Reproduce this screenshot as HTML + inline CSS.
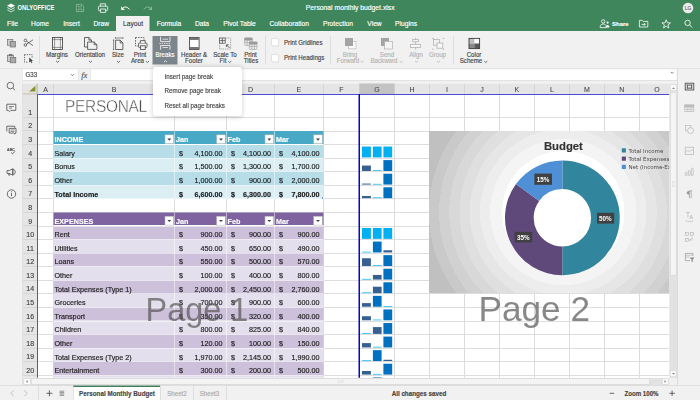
<!DOCTYPE html>
<html lang="en"><head><meta charset="utf-8"><title>Personal monthly budget.xlsx</title>
<style>
html,body{margin:0;padding:0;width:700px;height:400px;overflow:hidden;background:#f1f1f1}
#r{position:absolute;left:0;top:0;width:1400px;height:800px;overflow:hidden;transform:scale(.5);transform-origin:0 0;font-family:"Liberation Sans",sans-serif;color:#444}
.a{position:absolute;display:block}
.t{position:absolute;white-space:nowrap;-webkit-text-stroke:0.3px}
</style></head><body><div id="r">
<div class="a" style="left:0px;top:0px;width:1400px;height:62px;background:#40865c;"></div>
<svg class="a" style="left:0px;top:0px;" width="1400" height="62" viewBox="0 0 700 31"><path d="M11 3.6 L15 5.7 L11 7.8 L7 5.7 Z" fill="#fff"/><path d="M7.3 7.6 L11 9.6 L14.7 7.6" fill="none" stroke="#fff" stroke-width="1" opacity=".85"/><path d="M7.3 9.9 L11 11.9 L14.7 9.9" fill="none" stroke="#fff" stroke-width="1" opacity=".7"/><g opacity=".38" fill="none" stroke="#fff" stroke-width=".8"><path d="M76.4 4.4 h5.6 l1.6 1.6 v5.6 h-7.2 z"/><path d="M78 4.4 v2.4 h3.4 v-2.4"/><path d="M78 11.6 v-2.6 h4 v2.6"/></g><g fill="none" stroke="#fff" stroke-width=".8"><rect x="98.4" y="6.2" width="9.2" height="4.4" rx="1"/><path d="M100.4 6.2 v-2.4 h5.2 v2.4"/><path d="M100.4 9 h5.2 v3.4 h-5.2 z" fill="#40865c"/></g><path d="M122.6 8.4 Q125.6 5 129.5 9.3" fill="none" stroke="#fff" stroke-width="1"/><path d="M121.2 6.3 L121.2 9.9 L124.8 9.9 Z" fill="#fff"/><g opacity=".38"><path d="M150.6 8.4 Q147.6 5 143.7 9.3" fill="none" stroke="#fff" stroke-width="1"/><path d="M152 6.3 L152 9.9 L148.4 9.9 Z" fill="#fff"/></g><circle cx="688" cy="8" r="5.3" fill="#ececec"/><g fill="none" stroke="#fff" stroke-width=".8"><circle cx="603.2" cy="21.4" r="1.7"/><path d="M600.2 27.6 v-1 c0 -1.6 1.4 -2.6 3 -2.6 c1.6 0 3 1 3 2.6 v1 z"/></g><circle cx="607.6" cy="22.6" r="1.1" fill="#fff"/><path d="M605.8 27.6 c0 -1.6 .8 -2.6 1.8 -2.6 c1 0 1.8 1 1.8 2.6 z" fill="#fff"/><g fill="none" stroke="#fff" stroke-width=".8"><path d="M639.4 27 v-6.6 h3 l.8 1 h4.6 v5.6 z"/><path d="M641.6 24.4 h3.6 M643.9 23.1 l1.4 1.3 l-1.4 1.3"/></g><polygon points="666.2 19.8 667.32 22.76 670.48 22.91 668.01 24.89 668.85 27.94 666.2 26.2 663.55 27.94 664.39 24.89 661.92 22.91 665.08 22.76" fill="none" stroke="#fff" stroke-width=".8" stroke-linejoin="miter"/><g fill="none" stroke="#fff" stroke-width=".85"><circle cx="687.6" cy="22.9" r="2.7"/><path d="M689.6 24.9 L692.2 27.6"/></g></svg>
<div class="t" style="top:6px;line-height:19.32px;font-size:13.8px;color:#fff;font-weight:bold;left:35.2px;transform:scaleX(.84);transform-origin:0 50%;-webkit-text-stroke:0;">ONLYOFFICE</div>
<div class="t" style="top:6px;line-height:19.04px;font-size:13.6px;color:#fff;left:700.4px;transform:translateX(-50%);">Personal monthly budget.xlsx</div>
<div class="t" style="top:10px;line-height:13.72px;font-size:9.8px;color:#6a6a6a;left:1376px;transform:translateX(-50%);">LG</div>
<div class="t" style="top:40px;line-height:16.8px;font-size:12px;color:#fff;font-weight:bold;left:1224px;">Share</div>
<div class="a" style="left:232px;top:32px;width:67.2px;height:30px;background:#f1f1f1;"></div>
<div class="t" style="top:39px;line-height:18.76px;font-size:13.4px;color:#fff;left:25px;transform:translateX(-50%);">File</div>
<div class="t" style="top:39px;line-height:18.76px;font-size:13.4px;color:#fff;left:80px;transform:translateX(-50%);">Home</div>
<div class="t" style="top:39px;line-height:18.76px;font-size:13.4px;color:#fff;left:143px;transform:translateX(-50%);">Insert</div>
<div class="t" style="top:39px;line-height:18.76px;font-size:13.4px;color:#fff;left:202.6px;transform:translateX(-50%);">Draw</div>
<div class="t" style="top:39px;line-height:18.76px;font-size:13.4px;color:#444;left:266px;transform:translateX(-50%);">Layout</div>
<div class="t" style="top:39px;line-height:18.76px;font-size:13.4px;color:#fff;left:338px;transform:translateX(-50%);">Formula</div>
<div class="t" style="top:39px;line-height:18.76px;font-size:13.4px;color:#fff;left:404px;transform:translateX(-50%);">Data</div>
<div class="t" style="top:39px;line-height:18.76px;font-size:13.4px;color:#fff;left:479px;transform:translateX(-50%);">Pivot Table</div>
<div class="t" style="top:39px;line-height:18.76px;font-size:13.4px;color:#fff;left:578.4px;transform:translateX(-50%);">Collaboration</div>
<div class="t" style="top:39px;line-height:18.76px;font-size:13.4px;color:#fff;left:676px;transform:translateX(-50%);">Protection</div>
<div class="t" style="top:39px;line-height:18.76px;font-size:13.4px;color:#fff;left:749px;transform:translateX(-50%);">View</div>
<div class="t" style="top:39px;line-height:18.76px;font-size:13.4px;color:#fff;left:812px;transform:translateX(-50%);">Plugins</div>
<div class="a" style="left:0px;top:62px;width:1400px;height:75.4px;background:#f1f1f1;"></div>
<div class="a" style="left:0px;top:136.8px;width:1400px;height:1.2px;background:#d4d4d4;"></div>
<div class="a" style="left:79px;top:72px;width:1px;height:57px;background:#cbcbcb;"></div>
<div class="a" style="left:529.5px;top:72px;width:1px;height:57px;background:#cbcbcb;"></div>
<div class="a" style="left:659.5px;top:72px;width:1px;height:57px;background:#cbcbcb;"></div>
<div class="a" style="left:906.5px;top:72px;width:1px;height:57px;background:#cbcbcb;"></div>
<div class="a" style="left:305px;top:72px;width:50px;height:57px;background:#7d858c;"></div>
<svg class="a" style="left:0px;top:62px;" width="1400" height="76" viewBox="0 31 700 38"><g stroke="#707070" stroke-width=".7"><rect x="7.6" y="39.6" width="5.2" height="5.6" fill="#cfcfcf"/><rect x="10.2" y="41.4" width="5.2" height="5.6" fill="#a9a9a9"/></g><g stroke="#707070" stroke-width=".7"><rect x="7.6" y="55.2" width="6" height="6.4" fill="#cfcfcf"/><rect x="9.2" y="54.3" width="2.8" height="1.4" fill="#707070"/><rect x="10.2" y="57.4" width="5.6" height="5.4" fill="#a9a9a9"/></g><g fill="none" stroke="#444" stroke-width=".75"><circle cx="25.4" cy="40.4" r="1.3"/><circle cx="25.4" cy="45" r="1.3"/><path d="M26.5 41.2 L33 45.6 M26.5 44.2 L33 39.8"/></g><g fill="none" stroke="#444" stroke-width=".75"><path d="M24.5 54.6 h7.6 v3 M24.5 54.6 v7.6 h3" stroke-dasharray="1.3 1"/></g><path d="M29.2 57.4 L29.2 62.6 L30.6 61.4 L31.6 63.2 L32.4 62.8 L31.5 61 L33 60.8 Z" fill="#444"/><g fill="none" stroke="#444"><rect x="52.5" y="37.5" width="10" height="12" stroke-width=".85"/><path d="M54.6 37.5 v12 M60.4 37.5 v12 M52.5 39.6 h10 M52.5 47.4 h10" stroke-width=".5"/></g><g fill="#f1f1f1" stroke="#444" stroke-width=".8"><path d="M84.5 37.5 h4.4 l2.6 2.6 v6.9 h-7 z"/><path d="M88.9 37.5 v2.6 h2.6" fill="none"/><path d="M87.6 42 h6.6 l2.7 2.7 v4.7 h-9.3 z"/><path d="M94.2 42 v2.7 h2.7" fill="none"/></g><g fill="none" stroke="#444" stroke-width=".8"><path d="M115.6 40.2 h4.6 l2.7 2.7 v6.6 h-7.3 z"/><path d="M120.2 40.2 v2.7 h2.7"/><path d="M115.4 38 h7.6 M115.4 37.2 v1.6 M123 37.2 v1.6 M113.6 40 v9.6 M112.8 40 h1.6 M112.8 49.6 h1.6" stroke-width=".6"/></g><g fill="none" stroke="#444" stroke-width=".8"><path d="M135.5 37.5 h8.5 v3 M135.5 37.5 v8.5 h3" stroke-dasharray="1.5 1.1"/><rect x="138.5" y="43" width="8.5" height="4.5" rx="1" fill="#f1f1f1"/><path d="M140.4 43 v-2.4 h4.8 v2.4" fill="#f1f1f1"/><rect x="140.4" y="45.8" width="4.8" height="3.6" fill="#f1f1f1"/></g><g fill="none" stroke="#fff" stroke-width=".8"><path d="M160.6 36.8 v4.8 h9.4 v-4.8"/><path d="M162.6 39.2 h5.4" stroke-width=".7"/><path d="M159.4 43.5 h11.8" stroke-dasharray="1.4 .9" stroke-width=".7"/><path d="M160.6 49.7 v-4.2 h9.4 v4.2"/><path d="M162.6 47.5 h5.4" stroke-width=".7"/></g><g stroke="#444"><rect x="189.5" y="37.5" width="9.6" height="12" fill="#fff" stroke-width=".85"/><path d="M189.9 39.1 h8.8 M189.9 47.9 h8.8" stroke-width="1.5" stroke="#4a4a4a"/></g><g fill="none" stroke="#444" stroke-width=".7"><rect x="219.6" y="38" width="5.6" height="5.2"/><path d="M222.4 38 v5.2 M219.6 40.6 h5.6"/><path d="M225.2 38 h5.4 v11 h-11 v-5.8" stroke-dasharray="1.3 1" stroke-width=".6" stroke="#666"/><path d="M229.6 48 L226.6 45 M226.4 47 v-2.2 h2.2" stroke-width=".8"/></g><g fill="#ececec" stroke="#9a9a9a" stroke-width=".6"><rect x="244.6" y="38" width="7.6" height="7.4" rx=".8"/><path d="M244.6 40 h7.6 M244.6 42.4 h7.6 M247.1 40 v5.4 M249.7 40 v5.4" fill="none"/><rect x="244.6" y="38" width="7.6" height="2" fill="#9a9a9a" rx=".6"/><rect x="249.4" y="42" width="7.6" height="7.4" rx=".8"/><path d="M249.4 44 h7.6 M249.4 46.4 h7.6 M251.9 44 v5.4 M254.5 44 v5.4" fill="none"/><rect x="249.4" y="42" width="7.6" height="2" fill="#9a9a9a" rx=".6"/></g><rect x="271.6" y="38.6" width="7" height="7.2" rx=".8" fill="#fff" stroke="#cfcfcf" stroke-width=".6"/><rect x="271.6" y="54.6" width="7" height="7.2" rx=".8" fill="#fff" stroke="#cfcfcf" stroke-width=".6"/><rect x="348.6" y="41.6" width="7.4" height="7.2" fill="#fafafa" stroke="#bdbdbd" stroke-width=".7"/><rect x="345" y="38" width="8" height="8" fill="#a3a3a3"/><rect x="381" y="38" width="8" height="8" fill="#a3a3a3"/><rect x="384.6" y="41.4" width="8" height="7.6" fill="#f4f4f4" stroke="#b0b0b0" stroke-width=".7"/><g fill="#f6f6f6" stroke="#ababab" stroke-width=".7"><path d="M415.6 37.8 v11.8" fill="none"/><rect x="412.8" y="39.4" width="5.6" height="2.4"/><rect x="410.6" y="44.4" width="10" height="3"/></g><g fill="none" stroke="#ababab" stroke-width=".7"><rect x="433.6" y="39.6" width="5.8" height="5.6"/><rect x="437" y="43" width="5.8" height="5.2" fill="#f6f6f6"/><path d="M432.2 38.4 h1.4 M442.8 38.4 h1.4 M432.2 49.2 h1.4 M442.8 49.2 h1.4" stroke-width=".9"/></g><rect x="469" y="38.4" width="10.6" height="10.2" fill="#fff"/><rect x="469" y="38.4" width="5.3" height="5.1" fill="#bdbdbd"/><rect x="469" y="43.5" width="5.3" height="5.1" fill="#8a8a8a"/><rect x="474.3" y="43.5" width="5.3" height="5.1" fill="#5a5a5a"/><rect x="469" y="38.4" width="10.6" height="10.2" fill="none" stroke="#3c3c3c" stroke-width=".9"/><path d="M56.05 60.85 L57.6 62.35 L59.15 60.85" fill="none" stroke="#444" stroke-width="0.75"/><path d="M88.95 60.85 L90.5 62.35 L92.05 60.85" fill="none" stroke="#444" stroke-width="0.75"/><path d="M117.05 60.85 L118.6 62.35 L120.15 60.85" fill="none" stroke="#444" stroke-width="0.75"/><path d="M145.85 61.05 L147.4 62.55 L148.95 61.05" fill="none" stroke="#444" stroke-width="0.75"/><path d="M163.95 62.25 L165.5 60.75 L167.05 62.25" fill="none" stroke="#fff" stroke-width="0.75"/><path d="M228.15 61.05 L229.7 62.55 L231.25 61.05" fill="none" stroke="#444" stroke-width="0.75"/><path d="M360.65 61.05 L362.2 62.55 L363.75 61.05" fill="none" stroke="#b4b4b4" stroke-width="0.75"/><path d="M399.65 61.05 L401.2 62.55 L402.75 61.05" fill="none" stroke="#b4b4b4" stroke-width="0.75"/><path d="M414.95 60.85 L416.5 62.35 L418.05 60.85" fill="none" stroke="#b4b4b4" stroke-width="0.75"/><path d="M436.95 60.85 L438.5 62.35 L440.05 60.85" fill="none" stroke="#b4b4b4" stroke-width="0.75"/><path d="M484.25 61.05 L485.8 62.55 L487.35 61.05" fill="none" stroke="#444" stroke-width="0.75"/></svg>
<div class="t" style="top:101px;line-height:18.48px;font-size:13.2px;color:#444;left:114.4px;transform:translateX(-50%) scaleX(0.932);">Margins</div>
<div class="t" style="top:101px;line-height:18.48px;font-size:13.2px;color:#444;left:180px;transform:translateX(-50%) scaleX(0.932);">Orientation</div>
<div class="t" style="top:101px;line-height:18.48px;font-size:13.2px;color:#444;left:236px;transform:translateX(-50%) scaleX(0.932);">Size</div>
<div class="t" style="top:101px;line-height:18.48px;font-size:13.2px;color:#444;left:280.4px;transform:translateX(-50%) scaleX(0.932);">Print</div>
<div class="t" style="top:113px;line-height:18.48px;font-size:13.2px;color:#444;left:275px;transform:translateX(-50%) scaleX(0.932);">Area</div>
<div class="t" style="top:101px;line-height:18.48px;font-size:13.2px;color:#fff;left:330px;transform:translateX(-50%) scaleX(0.932);">Breaks</div>
<div class="t" style="top:101px;line-height:18.48px;font-size:13.2px;color:#444;left:388px;transform:translateX(-50%) scaleX(0.932);">Header &amp;</div>
<div class="t" style="top:113px;line-height:18.48px;font-size:13.2px;color:#444;left:388px;transform:translateX(-50%) scaleX(0.932);">Footer</div>
<div class="t" style="top:101px;line-height:18.48px;font-size:13.2px;color:#444;left:450.4px;transform:translateX(-50%) scaleX(0.932);">Scale To</div>
<div class="t" style="top:113px;line-height:18.48px;font-size:13.2px;color:#444;left:445.8px;transform:translateX(-50%) scaleX(0.932);">Fit</div>
<div class="t" style="top:101px;line-height:18.48px;font-size:13.2px;color:#444;left:501.2px;transform:translateX(-50%) scaleX(0.932);">Print</div>
<div class="t" style="top:113px;line-height:18.48px;font-size:13.2px;color:#444;left:502px;transform:translateX(-50%) scaleX(0.932);">Titles</div>
<div class="t" style="top:77px;line-height:18.48px;font-size:13.2px;color:#444;left:568px;transform:scaleX(0.932);transform-origin:0 50%;">Print Gridlines</div>
<div class="t" style="top:107px;line-height:18.48px;font-size:13.2px;color:#444;left:568px;transform:scaleX(0.932);transform-origin:0 50%;">Print Headings</div>
<div class="t" style="top:101px;line-height:18.48px;font-size:13.2px;color:#b4b4b4;left:700.4px;transform:translateX(-50%) scaleX(0.932);">Bring</div>
<div class="t" style="top:113px;line-height:18.48px;font-size:13.2px;color:#b4b4b4;left:696px;transform:translateX(-50%) scaleX(0.932);">Forward</div>
<div class="t" style="top:101px;line-height:18.48px;font-size:13.2px;color:#b4b4b4;left:773.6px;transform:translateX(-50%) scaleX(0.932);">Send</div>
<div class="t" style="top:113px;line-height:18.48px;font-size:13.2px;color:#b4b4b4;left:768.4px;transform:translateX(-50%) scaleX(0.932);">Backward</div>
<div class="t" style="top:101px;line-height:18.48px;font-size:13.2px;color:#b4b4b4;left:832px;transform:translateX(-50%) scaleX(0.932);">Align</div>
<div class="t" style="top:101px;line-height:18.48px;font-size:13.2px;color:#b4b4b4;left:875.2px;transform:translateX(-50%) scaleX(0.932);">Group</div>
<div class="t" style="top:101px;line-height:18.48px;font-size:13.2px;color:#444;left:947.6px;transform:translateX(-50%) scaleX(0.932);">Color</div>
<div class="t" style="top:113px;line-height:18.48px;font-size:13.2px;color:#444;left:942.4px;transform:translateX(-50%) scaleX(0.932);">Scheme</div>
<div class="a" style="left:0px;top:138px;width:44.4px;height:632.4px;background:#f1f1f1;"></div>
<div class="a" style="left:44px;top:138px;width:1.2px;height:632.4px;background:#d0d0d0;"></div>
<div class="a" style="left:1354.8px;top:138px;width:45.2px;height:632.4px;background:#f1f1f1;"></div>
<div class="a" style="left:1353.8px;top:138px;width:1.6px;height:632.4px;background:#c6c6c6;"></div>
<svg class="a" style="left:0px;top:156px;" width="44" height="250" viewBox="0 78 22 125"><g fill="none" stroke="#555" stroke-width=".85"><circle cx="10.4" cy="85.6" r="3.3"/><path d="M12.8 88 L15 90.2"/></g><g fill="none" stroke="#555" stroke-width=".85"><path d="M6.8 104.2 h9 v6.2 h-5 l-1.3 1.3 l-1.3 -1.3 h-1.4 z"/><path d="M9 106.5 h4.8 M9 108.1 h3" stroke-width=".7"/></g><g fill="none" stroke="#555" stroke-width=".85"><path d="M6.8 131.4 v-5.2 h8 v1.6"/><path d="M9.2 128.4 h6.8 v4.6 h-1 v1.2 l-1.2 -1.2 h-4.6 z"/><path d="M10.6 130 h4 M10.6 131.5 h4" stroke-width=".6"/></g><path d="M11.2 152.6 l1.3 1.3 l2.4 -2.6" fill="none" stroke="#555" stroke-width=".9"/><g fill="#555" stroke="#555" stroke-width=".6"><path d="M7 170.6 h2.2 l3.6 -1.8 v6.4 l-3.6 -1.8 h-2.2 z" fill="none" stroke-width=".85"/><path d="M12.8 169 c1.8 .4 2.4 1.8 2.4 3 c0 1.2 -.6 2.6 -2.4 3 z" fill="none" stroke-width=".8"/><path d="M8.6 173.4 v1.8 h1.2 v-1.8" fill="none" stroke-width=".7"/></g><g fill="none" stroke="#555" stroke-width=".85"><circle cx="11.5" cy="194" r="4.2"/><path d="M11.5 193.2 v3 M11.5 191.4 v.9" stroke-width=".9"/></g></svg>
<div class="t" style="top:295px;line-height:10.08px;font-size:7.2px;color:#555;font-weight:bold;left:22px;transform:translateX(-50%);">ABC</div>
<svg class="a" style="left:1356px;top:160px;" width="44" height="380" viewBox="678 80 22 190"><g fill="none" stroke="#4a4a4a" stroke-width=".85"><rect x="685.2" y="83.2" width="8.6" height="6.8"/><rect x="687.3" y="85.1" width="4.4" height="3" stroke-width=".8" /><path d="M685.2 85.1 h8.6 M685.2 88.1 h8.6 M687.3 83.2 v6.8 M691.7 83.2 v6.8" stroke-width=".4" stroke-dasharray=".6 .5"/></g><g fill="none" stroke="#b9b9b9" stroke-width=".7"><rect x="684.8" y="105" width="9" height="6.4"/><path d="M684.8 107.2 h9 M684.8 109.3 h9 M687.8 105 v6.4 M690.8 105 v6.4"/><rect x="684.8" y="105" width="9" height="1.6" fill="#b9b9b9"/></g><g fill="#f1f1f1" stroke="#b9b9b9" stroke-width=".75"><rect x="685.4" y="125.4" width="5.4" height="5.4"/><circle cx="690.6" cy="130.6" r="3"/></g><g fill="none" stroke="#b9b9b9" stroke-width=".75"><rect x="685.2" y="147.2" width="8.2" height="7.2"/><path d="M685.6 152.4 l2.2 -2.2 l1.8 1.6 l2 -2.4 l1.6 1.6"/></g><g fill="none" stroke="#b9b9b9" stroke-width=".7"><rect x="685.4" y="172.4" width="1.8" height="3.2" rx=".6"/><rect x="688.4" y="170.6" width="1.8" height="5" rx=".6"/><rect x="691.4" y="168.2" width="1.8" height="7.4" rx=".6"/></g><path d="M689.4 190.8 h2.8 M689.4 190.8 v7.4 M691.2 190.8 v7.4" fill="none" stroke="#9a9a9a" stroke-width=".7"/><path d="M689.4 190.8 c-3.6 0 -3.6 4 0 4 z" fill="#9a9a9a"/><g fill="none" stroke="#b9b9b9" stroke-width=".7"><path d="M685.8 212.4 h4.2 M687.9 212.4 v5"/><path d="M689.6 219 l1.6 -4 l1.6 4 M690.2 217.8 h2"/><path d="M685.4 220.8 c2 1 6 1 8 0" /></g><g fill="none" stroke="#b9b9b9" stroke-width=".7"><rect x="685.4" y="232.6" width="3" height="2.6"/><rect x="690.6" y="232.6" width="3" height="2.6"/><rect x="685.4" y="238.6" width="3" height="2.6"/><path d="M692 236.6 v3.4 h-2.2 M690.8 239 l-1 1 l1 1"/></g><g fill="none" stroke="#9a9a9a" stroke-width=".7"><path d="M690 260.6 h-4.6 v-7.2 h7.6 v2.4"/><path d="M685.4 255.2 h7.6 M685.4 257 h4" stroke-width=".5"/><path d="M689.6 257.4 h5 l-1.9 2.2 v2.6 l-1.2 -.8 v-1.8 z" fill="#8a8a8a" stroke="none"/></g></svg>
<div class="a" style="left:45.2px;top:138px;width:1309.2px;height:29.2px;background:#f1f1f1;"></div>
<div class="a" style="left:45.8px;top:139px;width:110.4px;height:21.2px;background:#fff;"></div>
<div class="a" style="left:181.2px;top:139px;width:1172px;height:21.2px;background:#fff;"></div>
<div class="a" style="left:45.2px;top:160px;width:1309.2px;height:1px;background:#d2d2d2;"></div>
<div class="a" style="left:156.2px;top:139px;width:1px;height:21.2px;background:#d8d8d8;"></div>
<div class="a" style="left:180.6px;top:139px;width:1px;height:21.2px;background:#d8d8d8;"></div>
<div class="t" style="top:141px;line-height:18.48px;font-size:13.2px;color:#444;left:51.2px;transform:scaleX(0.932);transform-origin:0 50%;">G33</div>
<div class="t" style="top:138px;line-height:24.08px;font-size:17.2px;color:#555;left:168.6px;transform:translateX(-50%);font-family:'Liberation Serif',serif;"><i>fx</i></div>
<svg class="a" style="left:120px;top:138px;" width="1234" height="24" viewBox="60 69 617 12"><path d="M70.9 74.15 L72.4 75.65 L73.9 74.15" fill="none" stroke="#555" stroke-width="0.7"/><path d="M670.7 71.85 L672.2 73.35 L673.7 71.85" fill="none" stroke="#555" stroke-width="0.7"/></svg>
<div class="a" style="left:0;top:0;width:1400px;height:755.6px;overflow:hidden;clip-path:inset(0 60.6px 0 0)"><div class="a" style="left:45.6px;top:167px;width:1293.8px;height:588.6px;background:#fff;"></div><div class="a" style="left:45.6px;top:167px;width:1293.8px;height:21px;background:#e5e5e5;"></div><div class="a" style="left:718.8px;top:167px;width:70.2px;height:21px;background:#c3c3c3;"></div><div class="a" style="left:45.6px;top:187.8px;width:1293.8px;height:1px;background:#c6c6c6;"></div><div class="a" style="left:74.9px;top:167px;width:1px;height:21px;background:#c6c6c6;"></div><div class="a" style="left:106.3px;top:167px;width:1px;height:21px;background:#c6c6c6;"></div><div class="a" style="left:348.7px;top:167px;width:1px;height:21px;background:#c6c6c6;"></div><div class="a" style="left:452.1px;top:167px;width:1px;height:21px;background:#c6c6c6;"></div><div class="a" style="left:548.7px;top:167px;width:1px;height:21px;background:#c6c6c6;"></div><div class="a" style="left:646.1px;top:167px;width:1px;height:21px;background:#c6c6c6;"></div><div class="a" style="left:718.3px;top:167px;width:1px;height:21px;background:#c6c6c6;"></div><div class="a" style="left:788.5px;top:167px;width:1px;height:21px;background:#c6c6c6;"></div><div class="a" style="left:858.3px;top:167px;width:1px;height:21px;background:#c6c6c6;"></div><div class="a" style="left:928.3px;top:167px;width:1px;height:21px;background:#c6c6c6;"></div><div class="a" style="left:998.3px;top:167px;width:1px;height:21px;background:#c6c6c6;"></div><div class="a" style="left:1068.3px;top:167px;width:1px;height:21px;background:#c6c6c6;"></div><div class="a" style="left:1138.3px;top:167px;width:1px;height:21px;background:#c6c6c6;"></div><div class="a" style="left:1208.3px;top:167px;width:1px;height:21px;background:#c6c6c6;"></div><div class="a" style="left:1278.3px;top:167px;width:1px;height:21px;background:#c6c6c6;"></div><div class="a" style="left:1348.3px;top:167px;width:1px;height:21px;background:#c6c6c6;"></div><div class="t" style="top:170px;line-height:19.6px;font-size:14px;color:#444;left:91.1px;transform:translateX(-50%);-webkit-text-stroke:0.15px;">A</div><div class="t" style="top:170px;line-height:19.6px;font-size:14px;color:#444;left:228px;transform:translateX(-50%);-webkit-text-stroke:0.15px;">B</div><div class="t" style="top:170px;line-height:19.6px;font-size:14px;color:#444;left:400.9px;transform:translateX(-50%);-webkit-text-stroke:0.15px;">C</div><div class="t" style="top:170px;line-height:19.6px;font-size:14px;color:#444;left:500.9px;transform:translateX(-50%);-webkit-text-stroke:0.15px;">D</div><div class="t" style="top:170px;line-height:19.6px;font-size:14px;color:#444;left:597.9px;transform:translateX(-50%);-webkit-text-stroke:0.15px;">E</div><div class="t" style="top:170px;line-height:19.6px;font-size:14px;color:#444;left:682.7px;transform:translateX(-50%);-webkit-text-stroke:0.15px;">F</div><div class="t" style="top:170px;line-height:19.6px;font-size:14px;color:#444;left:753.9px;transform:translateX(-50%);-webkit-text-stroke:0.15px;">G</div><div class="t" style="top:170px;line-height:19.6px;font-size:14px;color:#444;left:823.9px;transform:translateX(-50%);-webkit-text-stroke:0.15px;">H</div><div class="t" style="top:170px;line-height:19.6px;font-size:14px;color:#444;left:893.8px;transform:translateX(-50%);-webkit-text-stroke:0.15px;">I</div><div class="t" style="top:170px;line-height:19.6px;font-size:14px;color:#444;left:963.8px;transform:translateX(-50%);-webkit-text-stroke:0.15px;">J</div><div class="t" style="top:170px;line-height:19.6px;font-size:14px;color:#444;left:1033.8px;transform:translateX(-50%);-webkit-text-stroke:0.15px;">K</div><div class="t" style="top:170px;line-height:19.6px;font-size:14px;color:#444;left:1103.8px;transform:translateX(-50%);-webkit-text-stroke:0.15px;">L</div><div class="t" style="top:170px;line-height:19.6px;font-size:14px;color:#444;left:1173.8px;transform:translateX(-50%);-webkit-text-stroke:0.15px;">M</div><div class="t" style="top:170px;line-height:19.6px;font-size:14px;color:#444;left:1243.8px;transform:translateX(-50%);-webkit-text-stroke:0.15px;">N</div><div class="t" style="top:170px;line-height:19.6px;font-size:14px;color:#444;left:1313.8px;transform:translateX(-50%);-webkit-text-stroke:0.15px;">O</div><div class="a" style="left:45.6px;top:188.4px;width:29.4px;height:567.2px;background:#e5e5e5;"></div><div class="a" style="left:74.6px;top:188.4px;width:1px;height:567.2px;background:#c6c6c6;"></div><div class="a" style="left:45.6px;top:234.3px;width:29.4px;height:1px;background:#c6c6c6;"></div><div class="t" style="top:216px;line-height:19.6px;font-size:14px;color:#444;left:60.4px;transform:translateX(-50%);">1</div><div class="a" style="left:45.6px;top:261.45px;width:29.4px;height:1px;background:#c6c6c6;"></div><div class="t" style="top:242px;line-height:19.6px;font-size:14px;color:#444;left:60.4px;transform:translateX(-50%);">2</div><div class="a" style="left:45.6px;top:288.6px;width:29.4px;height:1px;background:#c6c6c6;"></div><div class="t" style="top:270px;line-height:19.6px;font-size:14px;color:#444;left:60.4px;transform:translateX(-50%);">3</div><div class="a" style="left:45.6px;top:315.74px;width:29.4px;height:1px;background:#c6c6c6;"></div><div class="t" style="top:298px;line-height:19.6px;font-size:14px;color:#444;left:60.4px;transform:translateX(-50%);">4</div><div class="a" style="left:45.6px;top:342.89px;width:29.4px;height:1px;background:#c6c6c6;"></div><div class="t" style="top:324px;line-height:19.6px;font-size:14px;color:#444;left:60.4px;transform:translateX(-50%);">5</div><div class="a" style="left:45.6px;top:370.04px;width:29.4px;height:1px;background:#c6c6c6;"></div><div class="t" style="top:352px;line-height:19.6px;font-size:14px;color:#444;left:60.4px;transform:translateX(-50%);">6</div><div class="a" style="left:45.6px;top:397.19px;width:29.4px;height:1px;background:#c6c6c6;"></div><div class="t" style="top:378px;line-height:19.6px;font-size:14px;color:#444;left:60.4px;transform:translateX(-50%);">7</div><div class="a" style="left:45.6px;top:424.34px;width:29.4px;height:1px;background:#c6c6c6;"></div><div class="t" style="top:406px;line-height:19.6px;font-size:14px;color:#444;left:60.4px;transform:translateX(-50%);">8</div><div class="a" style="left:45.6px;top:451.48px;width:29.4px;height:1px;background:#c6c6c6;"></div><div class="t" style="top:434px;line-height:19.6px;font-size:14px;color:#444;left:60.4px;transform:translateX(-50%);">9</div><div class="a" style="left:45.6px;top:478.63px;width:29.4px;height:1px;background:#c6c6c6;"></div><div class="t" style="top:460px;line-height:19.6px;font-size:14px;color:#444;left:60.4px;transform:translateX(-50%);">10</div><div class="a" style="left:45.6px;top:505.78px;width:29.4px;height:1px;background:#c6c6c6;"></div><div class="t" style="top:488px;line-height:19.6px;font-size:14px;color:#444;left:60.4px;transform:translateX(-50%);">11</div><div class="a" style="left:45.6px;top:532.93px;width:29.4px;height:1px;background:#c6c6c6;"></div><div class="t" style="top:514px;line-height:19.6px;font-size:14px;color:#444;left:60.4px;transform:translateX(-50%);">12</div><div class="a" style="left:45.6px;top:560.08px;width:29.4px;height:1px;background:#c6c6c6;"></div><div class="t" style="top:542px;line-height:19.6px;font-size:14px;color:#444;left:60.4px;transform:translateX(-50%);">13</div><div class="a" style="left:45.6px;top:587.22px;width:29.4px;height:1px;background:#c6c6c6;"></div><div class="t" style="top:568px;line-height:19.6px;font-size:14px;color:#444;left:60.4px;transform:translateX(-50%);">14</div><div class="a" style="left:45.6px;top:614.37px;width:29.4px;height:1px;background:#c6c6c6;"></div><div class="t" style="top:596px;line-height:19.6px;font-size:14px;color:#444;left:60.4px;transform:translateX(-50%);">15</div><div class="a" style="left:45.6px;top:641.52px;width:29.4px;height:1px;background:#c6c6c6;"></div><div class="t" style="top:624px;line-height:19.6px;font-size:14px;color:#444;left:60.4px;transform:translateX(-50%);">16</div><div class="a" style="left:45.6px;top:668.67px;width:29.4px;height:1px;background:#c6c6c6;"></div><div class="t" style="top:650px;line-height:19.6px;font-size:14px;color:#444;left:60.4px;transform:translateX(-50%);">17</div><div class="a" style="left:45.6px;top:695.82px;width:29.4px;height:1px;background:#c6c6c6;"></div><div class="t" style="top:678px;line-height:19.6px;font-size:14px;color:#444;left:60.4px;transform:translateX(-50%);">18</div><div class="a" style="left:45.6px;top:722.96px;width:29.4px;height:1px;background:#c6c6c6;"></div><div class="t" style="top:704px;line-height:19.6px;font-size:14px;color:#444;left:60.4px;transform:translateX(-50%);">19</div><div class="a" style="left:45.6px;top:750.11px;width:29.4px;height:1px;background:#c6c6c6;"></div><div class="t" style="top:732px;line-height:19.6px;font-size:14px;color:#444;left:60.4px;transform:translateX(-50%);">20</div><div class="a" style="left:45.6px;top:777.26px;width:29.4px;height:1px;background:#c6c6c6;"></div><div class="a" style="left:106px;top:188.8px;width:2px;height:566.8px;background:#dbdbdb;"></div><div class="a" style="left:348px;top:188.8px;width:2px;height:566.8px;background:#dbdbdb;"></div><div class="a" style="left:452px;top:188.8px;width:2px;height:566.8px;background:#dbdbdb;"></div><div class="a" style="left:548px;top:188.8px;width:2px;height:566.8px;background:#dbdbdb;"></div><div class="a" style="left:646px;top:188.8px;width:2px;height:566.8px;background:#dbdbdb;"></div><div class="a" style="left:718px;top:188.8px;width:2px;height:566.8px;background:#dbdbdb;"></div><div class="a" style="left:788px;top:188.8px;width:2px;height:566.8px;background:#dbdbdb;"></div><div class="a" style="left:858px;top:188.8px;width:2px;height:566.8px;background:#dbdbdb;"></div><div class="a" style="left:928px;top:188.8px;width:2px;height:566.8px;background:#dbdbdb;"></div><div class="a" style="left:998px;top:188.8px;width:2px;height:566.8px;background:#dbdbdb;"></div><div class="a" style="left:1068px;top:188.8px;width:2px;height:566.8px;background:#dbdbdb;"></div><div class="a" style="left:1138px;top:188.8px;width:2px;height:566.8px;background:#dbdbdb;"></div><div class="a" style="left:1208px;top:188.8px;width:2px;height:566.8px;background:#dbdbdb;"></div><div class="a" style="left:1278px;top:188.8px;width:2px;height:566.8px;background:#dbdbdb;"></div><div class="a" style="left:1348px;top:188.8px;width:2px;height:566.8px;background:#dbdbdb;"></div><div class="a" style="left:75.4px;top:234px;width:1264px;height:2px;background:#dedede;"></div><div class="a" style="left:75.4px;top:262px;width:1264px;height:2px;background:#dedede;"></div><div class="a" style="left:75.4px;top:288px;width:1264px;height:2px;background:#dedede;"></div><div class="a" style="left:75.4px;top:316px;width:1264px;height:2px;background:#dedede;"></div><div class="a" style="left:75.4px;top:342px;width:1264px;height:2px;background:#dedede;"></div><div class="a" style="left:75.4px;top:370px;width:1264px;height:2px;background:#dedede;"></div><div class="a" style="left:75.4px;top:396px;width:1264px;height:2px;background:#dedede;"></div><div class="a" style="left:75.4px;top:424px;width:1264px;height:2px;background:#dedede;"></div><div class="a" style="left:75.4px;top:452px;width:1264px;height:2px;background:#dedede;"></div><div class="a" style="left:75.4px;top:478px;width:1264px;height:2px;background:#dedede;"></div><div class="a" style="left:75.4px;top:506px;width:1264px;height:2px;background:#dedede;"></div><div class="a" style="left:75.4px;top:532px;width:1264px;height:2px;background:#dedede;"></div><div class="a" style="left:75.4px;top:560px;width:1264px;height:2px;background:#dedede;"></div><div class="a" style="left:75.4px;top:586px;width:1264px;height:2px;background:#dedede;"></div><div class="a" style="left:75.4px;top:614px;width:1264px;height:2px;background:#dedede;"></div><div class="a" style="left:75.4px;top:642px;width:1264px;height:2px;background:#dedede;"></div><div class="a" style="left:75.4px;top:668px;width:1264px;height:2px;background:#dedede;"></div><div class="a" style="left:75.4px;top:696px;width:1264px;height:2px;background:#dedede;"></div><div class="a" style="left:75.4px;top:722px;width:1264px;height:2px;background:#dedede;"></div><div class="a" style="left:75.4px;top:750px;width:1264px;height:2px;background:#dedede;"></div><div class="a" style="left:75.4px;top:776px;width:1264px;height:2px;background:#dedede;"></div><svg class="a" style="left:45.6px;top:167px;" width="30" height="22.4" viewBox="22.8 83.5 15 11.2"><path d="M29 91.6 L35.2 91.6 L35.2 85.8 Z" fill="#858f2b"/><rect x="36.3" y="83.9" width="1" height="10" fill="#a9c88c"/><rect x="22.8" y="93.7" width="14.2" height=".8" fill="#b59d7c"/></svg><div class="a" style="left:106.8px;top:261.95px;width:539.8px;height:27.15px;background:#47a9c5;"></div><div class="a" style="left:106.8px;top:289.1px;width:539.8px;height:27.15px;background:#b6dde8;"></div><div class="a" style="left:106.8px;top:316.24px;width:539.8px;height:27.15px;background:#daeef3;"></div><div class="a" style="left:106.8px;top:343.39px;width:539.8px;height:27.15px;background:#b6dde8;"></div><div class="a" style="left:106.8px;top:370.54px;width:539.8px;height:27.15px;background:#daeef3;"></div><div class="a" style="left:106.8px;top:424.84px;width:539.8px;height:27.15px;background:#7f63a1;"></div><div class="a" style="left:106.8px;top:451.98px;width:539.8px;height:27.15px;background:#ccc0da;"></div><div class="a" style="left:106.8px;top:479.13px;width:539.8px;height:27.15px;background:#e4dfec;"></div><div class="a" style="left:106.8px;top:506.28px;width:539.8px;height:27.15px;background:#ccc0da;"></div><div class="a" style="left:106.8px;top:533.43px;width:539.8px;height:27.15px;background:#e4dfec;"></div><div class="a" style="left:106.8px;top:560.58px;width:539.8px;height:27.15px;background:#ccc0da;"></div><div class="a" style="left:106.8px;top:587.72px;width:539.8px;height:27.15px;background:#e4dfec;"></div><div class="a" style="left:106.8px;top:614.87px;width:539.8px;height:27.15px;background:#ccc0da;"></div><div class="a" style="left:106.8px;top:642.02px;width:539.8px;height:27.15px;background:#e4dfec;"></div><div class="a" style="left:106.8px;top:669.17px;width:539.8px;height:27.15px;background:#ccc0da;"></div><div class="a" style="left:106.8px;top:696.32px;width:539.8px;height:27.15px;background:#e4dfec;"></div><div class="a" style="left:106.8px;top:723.46px;width:539.8px;height:27.15px;background:#ccc0da;"></div><div class="a" style="left:106.8px;top:750.61px;width:539.8px;height:27.15px;background:#e4dfec;"></div><div class="a" style="left:106.8px;top:287.6px;width:539.8px;height:2.2px;background:#fff;"></div><div class="a" style="left:106.8px;top:315.64px;width:539.8px;height:1.2px;background:#fff;"></div><div class="a" style="left:106.8px;top:342.79px;width:539.8px;height:1.2px;background:#fff;"></div><div class="a" style="left:106.8px;top:369.94px;width:539.8px;height:1.2px;background:#fff;"></div><div class="a" style="left:106.8px;top:397.09px;width:539.8px;height:1.2px;background:#fff;"></div><div class="a" style="left:106.8px;top:450.48px;width:539.8px;height:2.2px;background:#fff;"></div><div class="a" style="left:106.8px;top:478.53px;width:539.8px;height:1.2px;background:#fff;"></div><div class="a" style="left:106.8px;top:505.68px;width:539.8px;height:1.2px;background:#fff;"></div><div class="a" style="left:106.8px;top:532.83px;width:539.8px;height:1.2px;background:#fff;"></div><div class="a" style="left:106.8px;top:559.98px;width:539.8px;height:1.2px;background:#fff;"></div><div class="a" style="left:106.8px;top:587.12px;width:539.8px;height:1.2px;background:#fff;"></div><div class="a" style="left:106.8px;top:614.27px;width:539.8px;height:1.2px;background:#fff;"></div><div class="a" style="left:106.8px;top:641.42px;width:539.8px;height:1.2px;background:#fff;"></div><div class="a" style="left:106.8px;top:668.57px;width:539.8px;height:1.2px;background:#fff;"></div><div class="a" style="left:106.8px;top:695.72px;width:539.8px;height:1.2px;background:#fff;"></div><div class="a" style="left:106.8px;top:722.86px;width:539.8px;height:1.2px;background:#fff;"></div><div class="a" style="left:106.8px;top:750.01px;width:539.8px;height:1.2px;background:#fff;"></div><div class="a" style="left:106.8px;top:777.16px;width:539.8px;height:1.2px;background:#fff;"></div><div class="a" style="left:348.6px;top:261.95px;width:1.2px;height:135.74px;background:#fff;"></div><div class="a" style="left:348.6px;top:424.84px;width:1.2px;height:330.76px;background:#fff;"></div><div class="a" style="left:452px;top:261.95px;width:1.2px;height:135.74px;background:#fff;"></div><div class="a" style="left:452px;top:424.84px;width:1.2px;height:330.76px;background:#fff;"></div><div class="a" style="left:548.6px;top:261.95px;width:1.2px;height:135.74px;background:#fff;"></div><div class="a" style="left:548.6px;top:424.84px;width:1.2px;height:330.76px;background:#fff;"></div><svg class="a" style="left:646px;top:188px;" width="694" height="568" viewBox="323 94 347 284"><rect x="362" y="146.55" width="8.9" height="10.87" fill="#00b0f0"/><rect x="372.9" y="146.55" width="8.7" height="10.87" fill="#00b0f0"/><rect x="383.4" y="146.55" width="8.8" height="10.87" fill="#00b0f0"/><rect x="362" y="165.56" width="8.9" height="5.44" fill="#376092"/><rect x="372.9" y="170.3" width="8.7" height="0.7" fill="#00b0f0"/><rect x="383.4" y="160.12" width="8.8" height="10.87" fill="#0070c0"/><rect x="362" y="183.58" width="8.9" height="0.99" fill="#376092"/><rect x="372.9" y="183.87" width="8.7" height="0.7" fill="#00b0f0"/><rect x="383.4" y="173.7" width="8.8" height="10.87" fill="#0070c0"/><rect x="362" y="195.97" width="8.9" height="2.17" fill="#376092"/><rect x="372.9" y="197.44" width="8.7" height="0.7" fill="#00b0f0"/><rect x="383.4" y="187.27" width="8.8" height="10.87" fill="#0070c0"/><rect x="362" y="227.99" width="8.9" height="10.87" fill="#00b0f0"/><rect x="372.9" y="227.99" width="8.7" height="10.87" fill="#00b0f0"/><rect x="383.4" y="227.99" width="8.8" height="10.87" fill="#00b0f0"/><rect x="362" y="251.74" width="8.9" height="0.7" fill="#00b0f0"/><rect x="372.9" y="241.57" width="8.7" height="10.87" fill="#0070c0"/><rect x="383.4" y="250.27" width="8.8" height="2.17" fill="#376092"/><rect x="362" y="258.25" width="8.9" height="7.77" fill="#376092"/><rect x="372.9" y="265.31" width="8.7" height="0.7" fill="#00b0f0"/><rect x="383.4" y="255.14" width="8.8" height="10.87" fill="#0070c0"/><rect x="362" y="278.89" width="8.9" height="0.7" fill="#00b0f0"/><rect x="372.9" y="274.93" width="8.7" height="4.66" fill="#376092"/><rect x="383.4" y="268.71" width="8.8" height="10.87" fill="#0070c0"/><rect x="362" y="292.46" width="8.9" height="0.7" fill="#00b0f0"/><rect x="372.9" y="286.72" width="8.7" height="6.44" fill="#376092"/><rect x="383.4" y="282.29" width="8.8" height="10.87" fill="#0070c0"/><rect x="362" y="303.11" width="8.9" height="3.62" fill="#376092"/><rect x="372.9" y="295.86" width="8.7" height="10.87" fill="#0070c0"/><rect x="383.4" y="306.04" width="8.8" height="0.7" fill="#00b0f0"/><rect x="362" y="316.23" width="8.9" height="4.08" fill="#376092"/><rect x="372.9" y="319.61" width="8.7" height="0.7" fill="#00b0f0"/><rect x="383.4" y="309.44" width="8.8" height="10.87" fill="#0070c0"/><rect x="362" y="333.18" width="8.9" height="0.7" fill="#00b0f0"/><rect x="372.9" y="327.09" width="8.7" height="6.8" fill="#376092"/><rect x="383.4" y="323.01" width="8.8" height="10.87" fill="#0070c0"/><rect x="362" y="343.11" width="8.9" height="4.35" fill="#376092"/><rect x="372.9" y="346.76" width="8.7" height="0.7" fill="#00b0f0"/><rect x="383.4" y="336.58" width="8.8" height="10.87" fill="#0070c0"/><rect x="362" y="360.33" width="8.9" height="0.7" fill="#00b0f0"/><rect x="372.9" y="350.16" width="8.7" height="10.87" fill="#0070c0"/><rect x="383.4" y="359.79" width="8.8" height="1.24" fill="#376092"/><rect x="362" y="370.98" width="8.9" height="3.62" fill="#376092"/><rect x="372.9" y="373.91" width="8.7" height="0.7" fill="#00b0f0"/><rect x="383.4" y="363.73" width="8.8" height="10.87" fill="#0070c0"/><rect x="362" y="387.48" width="8.9" height="0.7" fill="#00b0f0"/><rect x="372.9" y="377.31" width="8.7" height="10.87" fill="#0070c0"/><rect x="383.4" y="382.74" width="8.8" height="5.44" fill="#376092"/></svg><svg class="a" style="left:100px;top:188px;" width="560" height="568" viewBox="50 94 280 284"><rect x="165" y="134.87" width="8.6" height="8.8" fill="#fff" stroke="#b5b5b5" stroke-width=".5"/><path d="M167.3 138.47 h4 l-2 2.2 z" fill="#444"/><rect x="216.7" y="134.87" width="8.6" height="8.8" fill="#fff" stroke="#b5b5b5" stroke-width=".5"/><path d="M219 138.47 h4 l-2 2.2 z" fill="#444"/><rect x="265" y="134.87" width="8.6" height="8.8" fill="#fff" stroke="#b5b5b5" stroke-width=".5"/><path d="M267.3 138.47 h4 l-2 2.2 z" fill="#444"/><rect x="313.7" y="134.87" width="8.6" height="8.8" fill="#fff" stroke="#b5b5b5" stroke-width=".5"/><path d="M316 138.47 h4 l-2 2.2 z" fill="#444"/><rect x="165" y="216.32" width="8.6" height="8.8" fill="#fff" stroke="#b5b5b5" stroke-width=".5"/><path d="M167.3 219.92 h4 l-2 2.2 z" fill="#444"/><rect x="216.7" y="216.32" width="8.6" height="8.8" fill="#fff" stroke="#b5b5b5" stroke-width=".5"/><path d="M219 219.92 h4 l-2 2.2 z" fill="#444"/><rect x="265" y="216.32" width="8.6" height="8.8" fill="#fff" stroke="#b5b5b5" stroke-width=".5"/><path d="M267.3 219.92 h4 l-2 2.2 z" fill="#444"/><rect x="313.7" y="216.32" width="8.6" height="8.8" fill="#fff" stroke="#b5b5b5" stroke-width=".5"/><path d="M316 219.92 h4 l-2 2.2 z" fill="#444"/><path d="M323 198.54 v-1.6 l-1.6 1.6 z" fill="#3355cc"/></svg><div class="t" style="top:190px;line-height:46.76px;font-size:33.4px;color:#505050;left:130px;transform:scaleX(.925);transform-origin:0 50%;letter-spacing:-0.6px;-webkit-text-stroke:0.8px #fff;">PERSONAL</div><div class="t" style="top:268px;line-height:21.56px;font-size:15.4px;color:#fff;font-weight:bold;left:109.4px;transform:scaleX(0.935);transform-origin:0 50%;">INCOME</div><div class="t" style="top:268px;line-height:21.56px;font-size:15.4px;color:#fff;font-weight:bold;left:352px;transform:scaleX(0.935);transform-origin:0 50%;">Jan</div><div class="t" style="top:268px;line-height:21.56px;font-size:15.4px;color:#fff;font-weight:bold;left:455.4px;transform:scaleX(0.935);transform-origin:0 50%;">Feb</div><div class="t" style="top:268px;line-height:21.56px;font-size:15.4px;color:#fff;font-weight:bold;left:552px;transform:scaleX(0.935);transform-origin:0 50%;">Mar</div><div class="t" style="top:432px;line-height:21.56px;font-size:15.4px;color:#fff;font-weight:bold;left:109.4px;transform:scaleX(0.935);transform-origin:0 50%;">EXPENSES</div><div class="t" style="top:432px;line-height:21.56px;font-size:15.4px;color:#fff;font-weight:bold;left:352px;transform:scaleX(0.935);transform-origin:0 50%;">Jan</div><div class="t" style="top:432px;line-height:21.56px;font-size:15.4px;color:#fff;font-weight:bold;left:455.4px;transform:scaleX(0.935);transform-origin:0 50%;">Feb</div><div class="t" style="top:432px;line-height:21.56px;font-size:15.4px;color:#fff;font-weight:bold;left:552px;transform:scaleX(0.935);transform-origin:0 50%;">Mar</div><div class="t" style="top:296px;line-height:21.56px;font-size:15.4px;color:#1a1a1a;left:109.4px;transform:scaleX(0.935);transform-origin:0 50%;">Salary</div><div class="t" style="top:296px;line-height:21.56px;font-size:15.4px;color:#1a1a1a;left:358.4px;transform:scaleX(0.935);transform-origin:0 50%;">$</div><div class="t" style="top:296px;line-height:21.56px;font-size:15.4px;color:#1a1a1a;right:954.6px;transform:scaleX(0.935);transform-origin:100% 50%;">4,100.00</div><div class="t" style="top:296px;line-height:21.56px;font-size:15.4px;color:#1a1a1a;left:461.8px;transform:scaleX(0.935);transform-origin:0 50%;">$</div><div class="t" style="top:296px;line-height:21.56px;font-size:15.4px;color:#1a1a1a;right:858px;transform:scaleX(0.935);transform-origin:100% 50%;">4,100.00</div><div class="t" style="top:296px;line-height:21.56px;font-size:15.4px;color:#1a1a1a;left:558.4px;transform:scaleX(0.935);transform-origin:0 50%;">$</div><div class="t" style="top:296px;line-height:21.56px;font-size:15.4px;color:#1a1a1a;right:760.6px;transform:scaleX(0.935);transform-origin:100% 50%;">4,100.00</div><div class="t" style="top:322px;line-height:21.56px;font-size:15.4px;color:#1a1a1a;left:109.4px;transform:scaleX(0.935);transform-origin:0 50%;">Bonus</div><div class="t" style="top:322px;line-height:21.56px;font-size:15.4px;color:#1a1a1a;left:358.4px;transform:scaleX(0.935);transform-origin:0 50%;">$</div><div class="t" style="top:322px;line-height:21.56px;font-size:15.4px;color:#1a1a1a;right:954.6px;transform:scaleX(0.935);transform-origin:100% 50%;">1,500.00</div><div class="t" style="top:322px;line-height:21.56px;font-size:15.4px;color:#1a1a1a;left:461.8px;transform:scaleX(0.935);transform-origin:0 50%;">$</div><div class="t" style="top:322px;line-height:21.56px;font-size:15.4px;color:#1a1a1a;right:858px;transform:scaleX(0.935);transform-origin:100% 50%;">1,300.00</div><div class="t" style="top:322px;line-height:21.56px;font-size:15.4px;color:#1a1a1a;left:558.4px;transform:scaleX(0.935);transform-origin:0 50%;">$</div><div class="t" style="top:322px;line-height:21.56px;font-size:15.4px;color:#1a1a1a;right:760.6px;transform:scaleX(0.935);transform-origin:100% 50%;">1,700.00</div><div class="t" style="top:350px;line-height:21.56px;font-size:15.4px;color:#1a1a1a;left:109.4px;transform:scaleX(0.935);transform-origin:0 50%;">Other</div><div class="t" style="top:350px;line-height:21.56px;font-size:15.4px;color:#1a1a1a;left:358.4px;transform:scaleX(0.935);transform-origin:0 50%;">$</div><div class="t" style="top:350px;line-height:21.56px;font-size:15.4px;color:#1a1a1a;right:954.6px;transform:scaleX(0.935);transform-origin:100% 50%;">1,000.00</div><div class="t" style="top:350px;line-height:21.56px;font-size:15.4px;color:#1a1a1a;left:461.8px;transform:scaleX(0.935);transform-origin:0 50%;">$</div><div class="t" style="top:350px;line-height:21.56px;font-size:15.4px;color:#1a1a1a;right:858px;transform:scaleX(0.935);transform-origin:100% 50%;">900.00</div><div class="t" style="top:350px;line-height:21.56px;font-size:15.4px;color:#1a1a1a;left:558.4px;transform:scaleX(0.935);transform-origin:0 50%;">$</div><div class="t" style="top:350px;line-height:21.56px;font-size:15.4px;color:#1a1a1a;right:760.6px;transform:scaleX(0.935);transform-origin:100% 50%;">2,000.00</div><div class="t" style="top:378px;line-height:21.56px;font-size:15.4px;color:#1a1a1a;font-weight:bold;left:109.4px;transform:scaleX(0.935);transform-origin:0 50%;">Total Income</div><div class="t" style="top:378px;line-height:21.56px;font-size:15.4px;color:#1a1a1a;font-weight:bold;left:358.4px;transform:scaleX(0.935);transform-origin:0 50%;">$</div><div class="t" style="top:378px;line-height:21.56px;font-size:15.4px;color:#1a1a1a;font-weight:bold;right:954.6px;transform:scaleX(0.935);transform-origin:100% 50%;">6,600.00</div><div class="t" style="top:378px;line-height:21.56px;font-size:15.4px;color:#1a1a1a;font-weight:bold;left:461.8px;transform:scaleX(0.935);transform-origin:0 50%;">$</div><div class="t" style="top:378px;line-height:21.56px;font-size:15.4px;color:#1a1a1a;font-weight:bold;right:858px;transform:scaleX(0.935);transform-origin:100% 50%;">6,300.00</div><div class="t" style="top:378px;line-height:21.56px;font-size:15.4px;color:#1a1a1a;font-weight:bold;left:558.4px;transform:scaleX(0.935);transform-origin:0 50%;">$</div><div class="t" style="top:378px;line-height:21.56px;font-size:15.4px;color:#1a1a1a;font-weight:bold;right:760.6px;transform:scaleX(0.935);transform-origin:100% 50%;">7,800.00</div><div class="t" style="top:458px;line-height:21.56px;font-size:15.4px;color:#1a1a1a;left:109.4px;transform:scaleX(0.935);transform-origin:0 50%;">Rent</div><div class="t" style="top:458px;line-height:21.56px;font-size:15.4px;color:#1a1a1a;left:358.4px;transform:scaleX(0.935);transform-origin:0 50%;">$</div><div class="t" style="top:458px;line-height:21.56px;font-size:15.4px;color:#1a1a1a;right:954.6px;transform:scaleX(0.935);transform-origin:100% 50%;">900.00</div><div class="t" style="top:458px;line-height:21.56px;font-size:15.4px;color:#1a1a1a;left:461.8px;transform:scaleX(0.935);transform-origin:0 50%;">$</div><div class="t" style="top:458px;line-height:21.56px;font-size:15.4px;color:#1a1a1a;right:858px;transform:scaleX(0.935);transform-origin:100% 50%;">900.00</div><div class="t" style="top:458px;line-height:21.56px;font-size:15.4px;color:#1a1a1a;left:558.4px;transform:scaleX(0.935);transform-origin:0 50%;">$</div><div class="t" style="top:458px;line-height:21.56px;font-size:15.4px;color:#1a1a1a;right:760.6px;transform:scaleX(0.935);transform-origin:100% 50%;">900.00</div><div class="t" style="top:486px;line-height:21.56px;font-size:15.4px;color:#1a1a1a;left:109.4px;transform:scaleX(0.935);transform-origin:0 50%;">Utilities</div><div class="t" style="top:486px;line-height:21.56px;font-size:15.4px;color:#1a1a1a;left:358.4px;transform:scaleX(0.935);transform-origin:0 50%;">$</div><div class="t" style="top:486px;line-height:21.56px;font-size:15.4px;color:#1a1a1a;right:954.6px;transform:scaleX(0.935);transform-origin:100% 50%;">450.00</div><div class="t" style="top:486px;line-height:21.56px;font-size:15.4px;color:#1a1a1a;left:461.8px;transform:scaleX(0.935);transform-origin:0 50%;">$</div><div class="t" style="top:486px;line-height:21.56px;font-size:15.4px;color:#1a1a1a;right:858px;transform:scaleX(0.935);transform-origin:100% 50%;">650.00</div><div class="t" style="top:486px;line-height:21.56px;font-size:15.4px;color:#1a1a1a;left:558.4px;transform:scaleX(0.935);transform-origin:0 50%;">$</div><div class="t" style="top:486px;line-height:21.56px;font-size:15.4px;color:#1a1a1a;right:760.6px;transform:scaleX(0.935);transform-origin:100% 50%;">490.00</div><div class="t" style="top:512px;line-height:21.56px;font-size:15.4px;color:#1a1a1a;left:109.4px;transform:scaleX(0.935);transform-origin:0 50%;">Loans</div><div class="t" style="top:512px;line-height:21.56px;font-size:15.4px;color:#1a1a1a;left:358.4px;transform:scaleX(0.935);transform-origin:0 50%;">$</div><div class="t" style="top:512px;line-height:21.56px;font-size:15.4px;color:#1a1a1a;right:954.6px;transform:scaleX(0.935);transform-origin:100% 50%;">550.00</div><div class="t" style="top:512px;line-height:21.56px;font-size:15.4px;color:#1a1a1a;left:461.8px;transform:scaleX(0.935);transform-origin:0 50%;">$</div><div class="t" style="top:512px;line-height:21.56px;font-size:15.4px;color:#1a1a1a;right:858px;transform:scaleX(0.935);transform-origin:100% 50%;">500.00</div><div class="t" style="top:512px;line-height:21.56px;font-size:15.4px;color:#1a1a1a;left:558.4px;transform:scaleX(0.935);transform-origin:0 50%;">$</div><div class="t" style="top:512px;line-height:21.56px;font-size:15.4px;color:#1a1a1a;right:760.6px;transform:scaleX(0.935);transform-origin:100% 50%;">570.00</div><div class="t" style="top:540px;line-height:21.56px;font-size:15.4px;color:#1a1a1a;left:109.4px;transform:scaleX(0.935);transform-origin:0 50%;">Other</div><div class="t" style="top:540px;line-height:21.56px;font-size:15.4px;color:#1a1a1a;left:358.4px;transform:scaleX(0.935);transform-origin:0 50%;">$</div><div class="t" style="top:540px;line-height:21.56px;font-size:15.4px;color:#1a1a1a;right:954.6px;transform:scaleX(0.935);transform-origin:100% 50%;">100.00</div><div class="t" style="top:540px;line-height:21.56px;font-size:15.4px;color:#1a1a1a;left:461.8px;transform:scaleX(0.935);transform-origin:0 50%;">$</div><div class="t" style="top:540px;line-height:21.56px;font-size:15.4px;color:#1a1a1a;right:858px;transform:scaleX(0.935);transform-origin:100% 50%;">400.00</div><div class="t" style="top:540px;line-height:21.56px;font-size:15.4px;color:#1a1a1a;left:558.4px;transform:scaleX(0.935);transform-origin:0 50%;">$</div><div class="t" style="top:540px;line-height:21.56px;font-size:15.4px;color:#1a1a1a;right:760.6px;transform:scaleX(0.935);transform-origin:100% 50%;">800.00</div><div class="t" style="top:568px;line-height:21.56px;font-size:15.4px;color:#1a1a1a;left:109.4px;transform:scaleX(0.935);transform-origin:0 50%;">Total Expenses (Type 1)</div><div class="t" style="top:568px;line-height:21.56px;font-size:15.4px;color:#1a1a1a;left:358.4px;transform:scaleX(0.935);transform-origin:0 50%;">$</div><div class="t" style="top:568px;line-height:21.56px;font-size:15.4px;color:#1a1a1a;right:954.6px;transform:scaleX(0.935);transform-origin:100% 50%;">2,000.00</div><div class="t" style="top:568px;line-height:21.56px;font-size:15.4px;color:#1a1a1a;left:461.8px;transform:scaleX(0.935);transform-origin:0 50%;">$</div><div class="t" style="top:568px;line-height:21.56px;font-size:15.4px;color:#1a1a1a;right:858px;transform:scaleX(0.935);transform-origin:100% 50%;">2,450.00</div><div class="t" style="top:568px;line-height:21.56px;font-size:15.4px;color:#1a1a1a;left:558.4px;transform:scaleX(0.935);transform-origin:0 50%;">$</div><div class="t" style="top:568px;line-height:21.56px;font-size:15.4px;color:#1a1a1a;right:760.6px;transform:scaleX(0.935);transform-origin:100% 50%;">2,760.00</div><div class="t" style="top:594px;line-height:21.56px;font-size:15.4px;color:#1a1a1a;left:109.4px;transform:scaleX(0.935);transform-origin:0 50%;">Groceries</div><div class="t" style="top:594px;line-height:21.56px;font-size:15.4px;color:#1a1a1a;left:358.4px;transform:scaleX(0.935);transform-origin:0 50%;">$</div><div class="t" style="top:594px;line-height:21.56px;font-size:15.4px;color:#1a1a1a;right:954.6px;transform:scaleX(0.935);transform-origin:100% 50%;">700.00</div><div class="t" style="top:594px;line-height:21.56px;font-size:15.4px;color:#1a1a1a;left:461.8px;transform:scaleX(0.935);transform-origin:0 50%;">$</div><div class="t" style="top:594px;line-height:21.56px;font-size:15.4px;color:#1a1a1a;right:858px;transform:scaleX(0.935);transform-origin:100% 50%;">900.00</div><div class="t" style="top:594px;line-height:21.56px;font-size:15.4px;color:#1a1a1a;left:558.4px;transform:scaleX(0.935);transform-origin:0 50%;">$</div><div class="t" style="top:594px;line-height:21.56px;font-size:15.4px;color:#1a1a1a;right:760.6px;transform:scaleX(0.935);transform-origin:100% 50%;">600.00</div><div class="t" style="top:622px;line-height:21.56px;font-size:15.4px;color:#1a1a1a;left:109.4px;transform:scaleX(0.935);transform-origin:0 50%;">Transport</div><div class="t" style="top:622px;line-height:21.56px;font-size:15.4px;color:#1a1a1a;left:358.4px;transform:scaleX(0.935);transform-origin:0 50%;">$</div><div class="t" style="top:622px;line-height:21.56px;font-size:15.4px;color:#1a1a1a;right:954.6px;transform:scaleX(0.935);transform-origin:100% 50%;">350.00</div><div class="t" style="top:622px;line-height:21.56px;font-size:15.4px;color:#1a1a1a;left:461.8px;transform:scaleX(0.935);transform-origin:0 50%;">$</div><div class="t" style="top:622px;line-height:21.56px;font-size:15.4px;color:#1a1a1a;right:858px;transform:scaleX(0.935);transform-origin:100% 50%;">320.00</div><div class="t" style="top:622px;line-height:21.56px;font-size:15.4px;color:#1a1a1a;left:558.4px;transform:scaleX(0.935);transform-origin:0 50%;">$</div><div class="t" style="top:622px;line-height:21.56px;font-size:15.4px;color:#1a1a1a;right:760.6px;transform:scaleX(0.935);transform-origin:100% 50%;">400.00</div><div class="t" style="top:648px;line-height:21.56px;font-size:15.4px;color:#1a1a1a;left:109.4px;transform:scaleX(0.935);transform-origin:0 50%;">Children</div><div class="t" style="top:648px;line-height:21.56px;font-size:15.4px;color:#1a1a1a;left:358.4px;transform:scaleX(0.935);transform-origin:0 50%;">$</div><div class="t" style="top:648px;line-height:21.56px;font-size:15.4px;color:#1a1a1a;right:954.6px;transform:scaleX(0.935);transform-origin:100% 50%;">800.00</div><div class="t" style="top:648px;line-height:21.56px;font-size:15.4px;color:#1a1a1a;left:461.8px;transform:scaleX(0.935);transform-origin:0 50%;">$</div><div class="t" style="top:648px;line-height:21.56px;font-size:15.4px;color:#1a1a1a;right:858px;transform:scaleX(0.935);transform-origin:100% 50%;">825.00</div><div class="t" style="top:648px;line-height:21.56px;font-size:15.4px;color:#1a1a1a;left:558.4px;transform:scaleX(0.935);transform-origin:0 50%;">$</div><div class="t" style="top:648px;line-height:21.56px;font-size:15.4px;color:#1a1a1a;right:760.6px;transform:scaleX(0.935);transform-origin:100% 50%;">840.00</div><div class="t" style="top:676px;line-height:21.56px;font-size:15.4px;color:#1a1a1a;left:109.4px;transform:scaleX(0.935);transform-origin:0 50%;">Other</div><div class="t" style="top:676px;line-height:21.56px;font-size:15.4px;color:#1a1a1a;left:358.4px;transform:scaleX(0.935);transform-origin:0 50%;">$</div><div class="t" style="top:676px;line-height:21.56px;font-size:15.4px;color:#1a1a1a;right:954.6px;transform:scaleX(0.935);transform-origin:100% 50%;">120.00</div><div class="t" style="top:676px;line-height:21.56px;font-size:15.4px;color:#1a1a1a;left:461.8px;transform:scaleX(0.935);transform-origin:0 50%;">$</div><div class="t" style="top:676px;line-height:21.56px;font-size:15.4px;color:#1a1a1a;right:858px;transform:scaleX(0.935);transform-origin:100% 50%;">100.00</div><div class="t" style="top:676px;line-height:21.56px;font-size:15.4px;color:#1a1a1a;left:558.4px;transform:scaleX(0.935);transform-origin:0 50%;">$</div><div class="t" style="top:676px;line-height:21.56px;font-size:15.4px;color:#1a1a1a;right:760.6px;transform:scaleX(0.935);transform-origin:100% 50%;">150.00</div><div class="t" style="top:704px;line-height:21.56px;font-size:15.4px;color:#1a1a1a;left:109.4px;transform:scaleX(0.935);transform-origin:0 50%;">Total Expenses (Type 2)</div><div class="t" style="top:704px;line-height:21.56px;font-size:15.4px;color:#1a1a1a;left:358.4px;transform:scaleX(0.935);transform-origin:0 50%;">$</div><div class="t" style="top:704px;line-height:21.56px;font-size:15.4px;color:#1a1a1a;right:954.6px;transform:scaleX(0.935);transform-origin:100% 50%;">1,970.00</div><div class="t" style="top:704px;line-height:21.56px;font-size:15.4px;color:#1a1a1a;left:461.8px;transform:scaleX(0.935);transform-origin:0 50%;">$</div><div class="t" style="top:704px;line-height:21.56px;font-size:15.4px;color:#1a1a1a;right:858px;transform:scaleX(0.935);transform-origin:100% 50%;">2,145.00</div><div class="t" style="top:704px;line-height:21.56px;font-size:15.4px;color:#1a1a1a;left:558.4px;transform:scaleX(0.935);transform-origin:0 50%;">$</div><div class="t" style="top:704px;line-height:21.56px;font-size:15.4px;color:#1a1a1a;right:760.6px;transform:scaleX(0.935);transform-origin:100% 50%;">1,990.00</div><div class="t" style="top:730px;line-height:21.56px;font-size:15.4px;color:#1a1a1a;left:109.4px;transform:scaleX(0.935);transform-origin:0 50%;">Entertainment</div><div class="t" style="top:730px;line-height:21.56px;font-size:15.4px;color:#1a1a1a;left:358.4px;transform:scaleX(0.935);transform-origin:0 50%;">$</div><div class="t" style="top:730px;line-height:21.56px;font-size:15.4px;color:#1a1a1a;right:954.6px;transform:scaleX(0.935);transform-origin:100% 50%;">300.00</div><div class="t" style="top:730px;line-height:21.56px;font-size:15.4px;color:#1a1a1a;left:461.8px;transform:scaleX(0.935);transform-origin:0 50%;">$</div><div class="t" style="top:730px;line-height:21.56px;font-size:15.4px;color:#1a1a1a;right:858px;transform:scaleX(0.935);transform-origin:100% 50%;">200.00</div><div class="t" style="top:730px;line-height:21.56px;font-size:15.4px;color:#1a1a1a;left:558.4px;transform:scaleX(0.935);transform-origin:0 50%;">$</div><div class="t" style="top:730px;line-height:21.56px;font-size:15.4px;color:#1a1a1a;right:760.6px;transform:scaleX(0.935);transform-origin:100% 50%;">500.00</div><div class="t" style="top:575px;line-height:90.72px;font-size:64.8px;color:rgba(85,85,85,.7);left:291.2px;-webkit-text-stroke:0;">Page 1</div><div class="t" style="top:569px;line-height:98.56px;font-size:70.4px;color:rgba(85,85,85,.7);left:957px;-webkit-text-stroke:0;">Page 2</div><svg class="a" style="left:857.6px;top:262.4px;" width="536" height="324.6" viewBox="428.8 131.2 268 162.3"><defs><radialGradient id="rg" gradientUnits="userSpaceOnUse" cx="563" cy="212.3" r="170"><stop offset="0" stop-color="#ffffff"/><stop offset="0.36" stop-color="#ffffff"/><stop offset="0.36" stop-color="#f4f4f4"/><stop offset="0.43" stop-color="#f4f4f4"/><stop offset="0.43" stop-color="#ededed"/><stop offset="0.49" stop-color="#ededed"/><stop offset="0.49" stop-color="#e6e6e6"/><stop offset="0.55" stop-color="#e6e6e6"/><stop offset="0.55" stop-color="#dfdfdf"/><stop offset="0.61" stop-color="#dfdfdf"/><stop offset="0.61" stop-color="#d8d8d8"/><stop offset="0.67" stop-color="#d8d8d8"/><stop offset="0.67" stop-color="#d1d1d1"/><stop offset="0.73" stop-color="#d1d1d1"/><stop offset="0.73" stop-color="#c9c9c9"/><stop offset="0.79" stop-color="#c9c9c9"/><stop offset="0.79" stop-color="#c0c0c0"/><stop offset="1" stop-color="#c0c0c0"/></radialGradient></defs><rect x="428.8" y="131.2" width="268" height="162.3" fill="url(#rg)"/><path d="M562.2 160.6 A57.4 57.4 0 0 1 562.2 275.4 L562.2 246.7 A28.7 28.7 0 0 0 562.2 189.3 Z" fill="#31859c"/><path d="M562.2 275.4 A57.4 57.4 0 0 1 515.76 184.26 L538.98 201.13 A28.7 28.7 0 0 0 562.2 246.7 Z" fill="#5f497a"/><path d="M515.76 184.26 A57.4 57.4 0 0 1 562.2 160.6 L562.2 189.3 A28.7 28.7 0 0 0 538.98 201.13 Z" fill="#4f8fd6"/><rect x="596.8" y="213" width="17.2" height="10.8" fill="#404040"/><rect x="514.5" y="232" width="17.5" height="10.6" fill="#404040"/><rect x="534.2" y="173.8" width="17.6" height="11.2" fill="#404040"/><rect x="621.6" y="148.5" width="4.1" height="4.2" fill="#31859c"/><rect x="621.6" y="156.75" width="4.1" height="4.2" fill="#5f497a"/><rect x="621.6" y="165" width="4.1" height="4.2" fill="#4f8fd6"/></svg><div class="t" style="top:277px;line-height:31.64px;font-size:22.6px;color:#333;font-weight:bold;left:1126.8px;transform:translateX(-50%);">Budget</div><div class="t" style="top:295px;line-height:15.4px;font-size:11px;color:#484848;left:1257px;font-family:'DejaVu Sans',sans-serif;-webkit-text-stroke:0;">Total Income</div><div class="t" style="top:311px;line-height:15.4px;font-size:11px;color:#484848;left:1257px;font-family:'DejaVu Sans',sans-serif;-webkit-text-stroke:0;">Total Expenses</div><div class="t" style="top:327px;line-height:15.4px;font-size:11px;color:#484848;left:1257px;font-family:'DejaVu Sans',sans-serif;-webkit-text-stroke:0;">Net (Income-Expenses)</div><div class="t" style="top:430px;line-height:17.64px;font-size:12.6px;color:#fff;font-weight:bold;left:1210.8px;transform:translateX(-50%);-webkit-text-stroke:0;">50%</div><div class="t" style="top:468px;line-height:17.64px;font-size:12.6px;color:#fff;font-weight:bold;left:1046.6px;transform:translateX(-50%);-webkit-text-stroke:0;">35%</div><div class="t" style="top:352px;line-height:17.64px;font-size:12.6px;color:#fff;font-weight:bold;left:1086px;transform:translateX(-50%);-webkit-text-stroke:0;">15%</div><div class="a" style="left:74.6px;top:188.2px;width:1264.8px;height:1.8px;background:#4b4bd8;"></div><div class="a" style="left:74px;top:188.2px;width:2px;height:567.4px;background:#5050d9;"></div><div class="a" style="left:716.9px;top:188.2px;width:3.3px;height:567.4px;background:#0606c8;"></div></div>
<div class="a" style="left:1339.4px;top:167px;width:14.6px;height:603.4px;background:#f1f1f1;"></div>
<div class="a" style="left:1339.4px;top:167.6px;width:14.6px;height:588px;background:#e1e1e1;"></div>
<div class="a" style="left:1339.6px;top:551.2px;width:14px;height:190px;background:#e2e2e2;"></div>
<div class="a" style="left:1340.2px;top:183.6px;width:12.8px;height:367.6px;background:#f4f4f4;box-sizing:border-box;border:1px solid #cdcdcd;"></div>
<div class="a" style="left:1340.2px;top:169.2px;width:12.8px;height:13.2px;background:#fbfbfb;box-sizing:border-box;border:1px solid #cdcdcd;"></div>
<div class="a" style="left:1340.2px;top:741.4px;width:12.8px;height:12.4px;background:#fbfbfb;box-sizing:border-box;border:1px solid #cdcdcd;"></div>
<div class="a" style="left:45.6px;top:755.6px;width:1293.8px;height:14.8px;background:#e1e1e1;"></div>
<div class="a" style="left:1299.6px;top:756.4px;width:23.6px;height:13.2px;background:#e2e2e2;"></div>
<div class="a" style="left:61.8px;top:756.6px;width:1237.8px;height:12.8px;background:#f4f4f4;box-sizing:border-box;border:1px solid #cdcdcd;"></div>
<div class="a" style="left:46.8px;top:756.6px;width:13.8px;height:12.8px;background:#fbfbfb;box-sizing:border-box;border:1px solid #cdcdcd;"></div>
<div class="a" style="left:1323.6px;top:756.6px;width:13.6px;height:12.8px;background:#fbfbfb;box-sizing:border-box;border:1px solid #cdcdcd;"></div>
<svg class="a" style="left:44px;top:166px;" width="1312" height="606" viewBox="22 83 656 303"><path d="M672 88.9 h3 l-1.5 -1.7 z" fill="#8a8a8a"/><path d="M672 373 h3 l-1.5 1.7 z" fill="#8a8a8a"/><path d="M27.7 379.9 v3 l-1.7 -1.5 z" fill="#8a8a8a"/><path d="M664.5 379.9 v3 l1.7 -1.5 z" fill="#8a8a8a"/><path d="M672 181.6 h3 M672 183.2 h3 M672 184.8 h3 M672 186.4 h3" stroke="#d0d0d0" stroke-width=".5"/><path d="M338.2 380 v3 M339.8 380 v3 M341.4 380 v3 M343 380 v3" stroke="#d0d0d0" stroke-width=".5"/></svg>
<div class="a" style="left:0px;top:770.4px;width:1400px;height:29.6px;background:#f1f1f1;"></div>
<div class="a" style="left:0px;top:770px;width:1400px;height:1px;background:#cbcbcb;"></div>
<div class="a" style="left:76.6px;top:770.8px;width:1px;height:29.2px;background:#cbcbcb;"></div>
<div class="a" style="left:146px;top:770.8px;width:174px;height:29.2px;background:#fff;"></div>
<div class="a" style="left:146px;top:771.2px;width:174px;height:2.6px;background:#3c7f58;"></div>
<div class="a" style="left:145.6px;top:770.8px;width:1px;height:29.2px;background:#cbcbcb;"></div>
<div class="a" style="left:320px;top:770.8px;width:1px;height:29.2px;background:#cbcbcb;"></div>
<div class="a" style="left:386px;top:770.8px;width:1px;height:29.2px;background:#cbcbcb;"></div>
<div class="a" style="left:452px;top:770.8px;width:1px;height:29.2px;background:#cbcbcb;"></div>
<svg class="a" style="left:0px;top:772px;" width="1400" height="28" viewBox="0 386 700 14"><path d="M13.6 390.4 L11 393.3 L13.6 396.2 M24.4 390.4 L27 393.3 L24.4 396.2" fill="none" stroke="#ababab" stroke-width=".7"/><path d="M46.4 393.3 h6 M49.4 390.3 v6" stroke="#444" stroke-width=".8"/><path d="M59.6 391.2 h4.6 M59.6 392.6 h4.6 M59.6 394 h4.6 M59.6 395.4 h4.6" stroke="#6a6a6a" stroke-width=".7"/><path d="M609.6 393.3 h4.6 M669.4 393.3 h5.4 M672.1 390.6 v5.4" stroke="#444" stroke-width=".8"/></svg>
<div class="t" style="top:779px;line-height:18.76px;font-size:13.4px;color:#444;font-weight:bold;left:233.6px;transform:translateX(-50%) scaleX(0.94);">Personal Monthly Budget</div>
<div class="t" style="top:779px;line-height:18.48px;font-size:13.2px;color:#a9a9a9;left:354px;transform:translateX(-50%) scaleX(0.932);">Sheet2</div>
<div class="t" style="top:779px;line-height:18.48px;font-size:13.2px;color:#a9a9a9;left:419.2px;transform:translateX(-50%) scaleX(0.932);">Sheet3</div>
<div class="t" style="top:779px;line-height:18.76px;font-size:13.4px;color:#444;font-weight:bold;left:838.4px;transform:translateX(-50%) scaleX(0.937);">All changes saved</div>
<div class="t" style="top:779px;line-height:18.48px;font-size:13.2px;color:#444;font-weight:bold;left:1283.2px;transform:translateX(-50%) scaleX(0.932);">Zoom 100%</div>
<div class="a" style="left:306px;top:134.4px;width:178px;height:98px;background:#fff;border-radius:4px;box-shadow:0 1px 10px rgba(0,0,0,.2),0 0 1px rgba(0,0,0,.25);"></div>
<div class="t" style="top:145px;line-height:18.76px;font-size:13.4px;color:#444;left:329px;transform:scaleX(0.933);transform-origin:0 50%;">Insert page break</div>
<div class="t" style="top:173px;line-height:18.76px;font-size:13.4px;color:#444;left:329px;transform:scaleX(0.933);transform-origin:0 50%;">Remove page break</div>
<div class="t" style="top:203px;line-height:18.76px;font-size:13.4px;color:#444;left:329px;transform:scaleX(0.933);transform-origin:0 50%;">Reset all page breaks</div>
</div></body></html>
